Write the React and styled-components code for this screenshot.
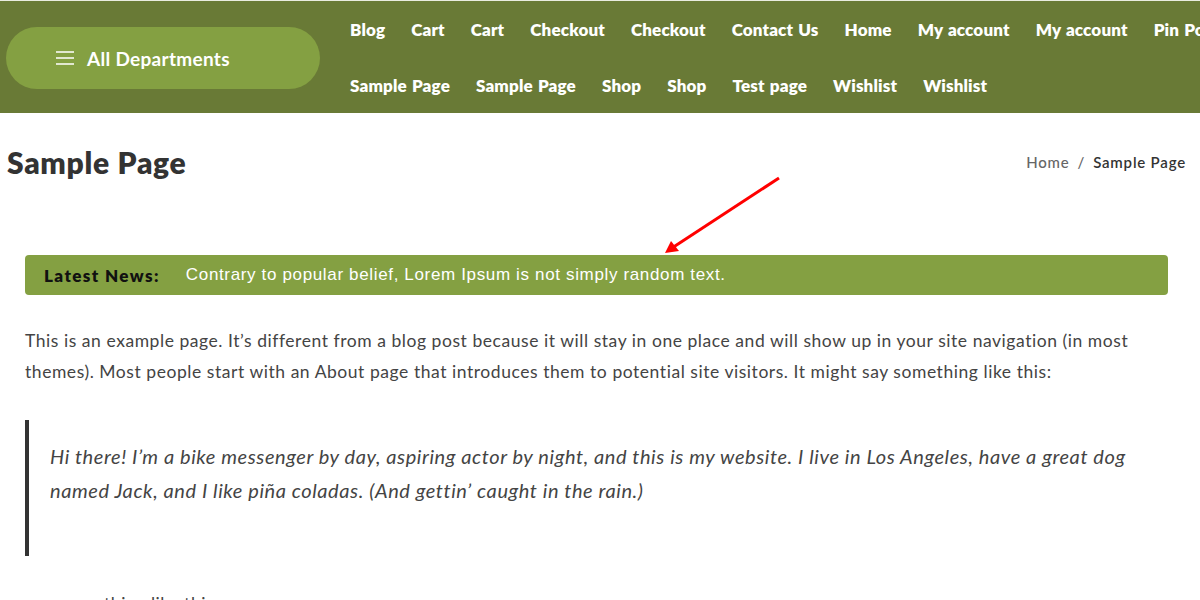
import React from 'react';
import styled, { createGlobalStyle } from 'styled-components';

const GlobalStyle = createGlobalStyle`
  html, body {
    margin: 0;
    padding: 0;
    background: #fff;
    font-family: Lato, "Noto Sans", sans-serif;
  }
  * { box-sizing: border-box; }
`;

const Page = styled.div`
  width: 1200px;
  height: 600px;
  overflow: hidden;
  position: relative;
`;

const Header = styled.header`
  height: 113px;
  background: #697a36;
  border-top: 1px solid #e9ecdf;
  display: flex;
  align-items: center;
  padding-left: 6px;
  overflow: hidden;
`;

const DeptButton = styled.button`
  width: 314px;
  height: 62px;
  flex-shrink: 0;
  border: none;
  border-radius: 31px;
  background: #84a042;
  color: #fff;
  display: flex;
  align-items: center;
  gap: 12px;
  padding-left: 49px;
  font-family: inherit;
  font-size: 19px;
  font-weight: 700;
  letter-spacing: 0.3px;
  margin-top: 2px;
`;

const Nav = styled.nav`
  display: flex;
  flex-wrap: wrap;
  align-content: center;
  padding-left: 30px;
  width: 1300px;
  flex-shrink: 0;
`;

const NavRow = styled.div`
  display: flex;
  gap: 26px;
  height: 56px;
  align-items: center;
  width: 100%;
  white-space: nowrap;
`;

const NavLink = styled.a`
  color: #fff;
  font-size: 17px;
  font-weight: 800;
  text-decoration: none;
  letter-spacing: 0.15px;
  word-spacing: 1px;
`;

const TitleBar = styled.div`
  display: flex;
  justify-content: space-between;
  align-items: center;
  padding: 31px 14px 0 7px;
`;

const Title = styled.h1`
  margin: 0;
  font-size: 30px;
  font-weight: 800;
  color: #333;
  letter-spacing: 0.7px;
`;

const Crumbs = styled.div`
  font-size: 15px;
  letter-spacing: 0.8px;
  display: flex;
  gap: 8px;
`;

const Crumb = styled.span`
  color: ${(p) => (p.$current ? '#333' : '#666')};
  font-weight: ${(p) => (p.$current ? 600 : 500)};
`;

const Content = styled.main`
  padding: 75px 32px 0 25px;
`;

const NewsBar = styled.div`
  height: 40px;
  background: #84a042;
  border-radius: 4px;
  display: flex;
  align-items: center;
  padding-left: 19px;
  gap: 26px;
`;

const NewsLabel = styled.span`
  font-size: 17px;
  font-weight: 800;
  color: #111;
  letter-spacing: 1.4px;
`;

const NewsText = styled.span`
  font-family: "Liberation Sans", Arial, sans-serif;
  font-size: 17px;
  color: #fff;
  letter-spacing: 0.65px;
`;

const Paragraph = styled.p`
  margin: ${(p) => (p.$after ? '32px' : '30px')} 0 0;
  font-size: 17.5px;
  letter-spacing: 0.55px;
  line-height: 31px;
  color: #444;
`;

const Quote = styled.blockquote`
  margin: 33px 0 0;
  border-left: 4px solid #333;
  padding: 19px 0 49px 21px;
  font-size: 20px;
  letter-spacing: 0.58px;
  line-height: 34px;
  font-style: italic;
  color: #444;
`;

const Arrow = styled.svg`
  position: absolute;
  left: 655px;
  top: 170px;
`;

const navRow1 = ['Blog', 'Cart', 'Cart', 'Checkout', 'Checkout', 'Contact Us', 'Home', 'My account', 'My account', 'Pin Post'];
const navRow2 = ['Sample Page', 'Sample Page', 'Shop', 'Shop', 'Test page', 'Wishlist', 'Wishlist'];

function App() {
  return (
    <Page>
      <GlobalStyle />
      <Header>
        <DeptButton>
          <svg width="20" height="16" viewBox="0 0 20 16">
            <path d="M1 2h18M1 8h18M1 14h18" stroke="#fff" strokeWidth="1.6" />
          </svg>
          All Departments
        </DeptButton>
        <Nav>
          <NavRow>
            {navRow1.map((n, i) => <NavLink key={i}>{n}</NavLink>)}
          </NavRow>
          <NavRow>
            {navRow2.map((n, i) => <NavLink key={i}>{n}</NavLink>)}
          </NavRow>
        </Nav>
      </Header>

      <TitleBar>
        <Title>Sample Page</Title>
        <Crumbs>
          <Crumb>Home</Crumb>
          <Crumb>/</Crumb>
          <Crumb $current>Sample Page</Crumb>
        </Crumbs>
      </TitleBar>

      <Content>
        <NewsBar>
          <NewsLabel>Latest News:</NewsLabel>
          <NewsText>Contrary to popular belief, Lorem Ipsum is not simply random text.</NewsText>
        </NewsBar>
        <Paragraph>
          This is an example page. It’s different from a blog post because it will stay in one place and will show up in your site navigation (in most themes). Most people start with an About page that introduces them to potential site visitors. It might say something like this:
        </Paragraph>
        <Quote>
          Hi there! I’m a bike messenger by day, aspiring actor by night, and this is my website. I live in Los Angeles, have a great dog named Jack, and I like piña coladas. (And gettin’ caught in the rain.)
        </Quote>
        <Paragraph $after>…or something like this:</Paragraph>
      </Content>

      <Arrow width="130" height="90" viewBox="655 170 130 90">
        <line x1="779" y1="178" x2="672" y2="248" stroke="#f00" strokeWidth="3" />
        <polygon points="665,253 671,241 679,251" fill="#f00" />
      </Arrow>
    </Page>
  );
}

export default App;
